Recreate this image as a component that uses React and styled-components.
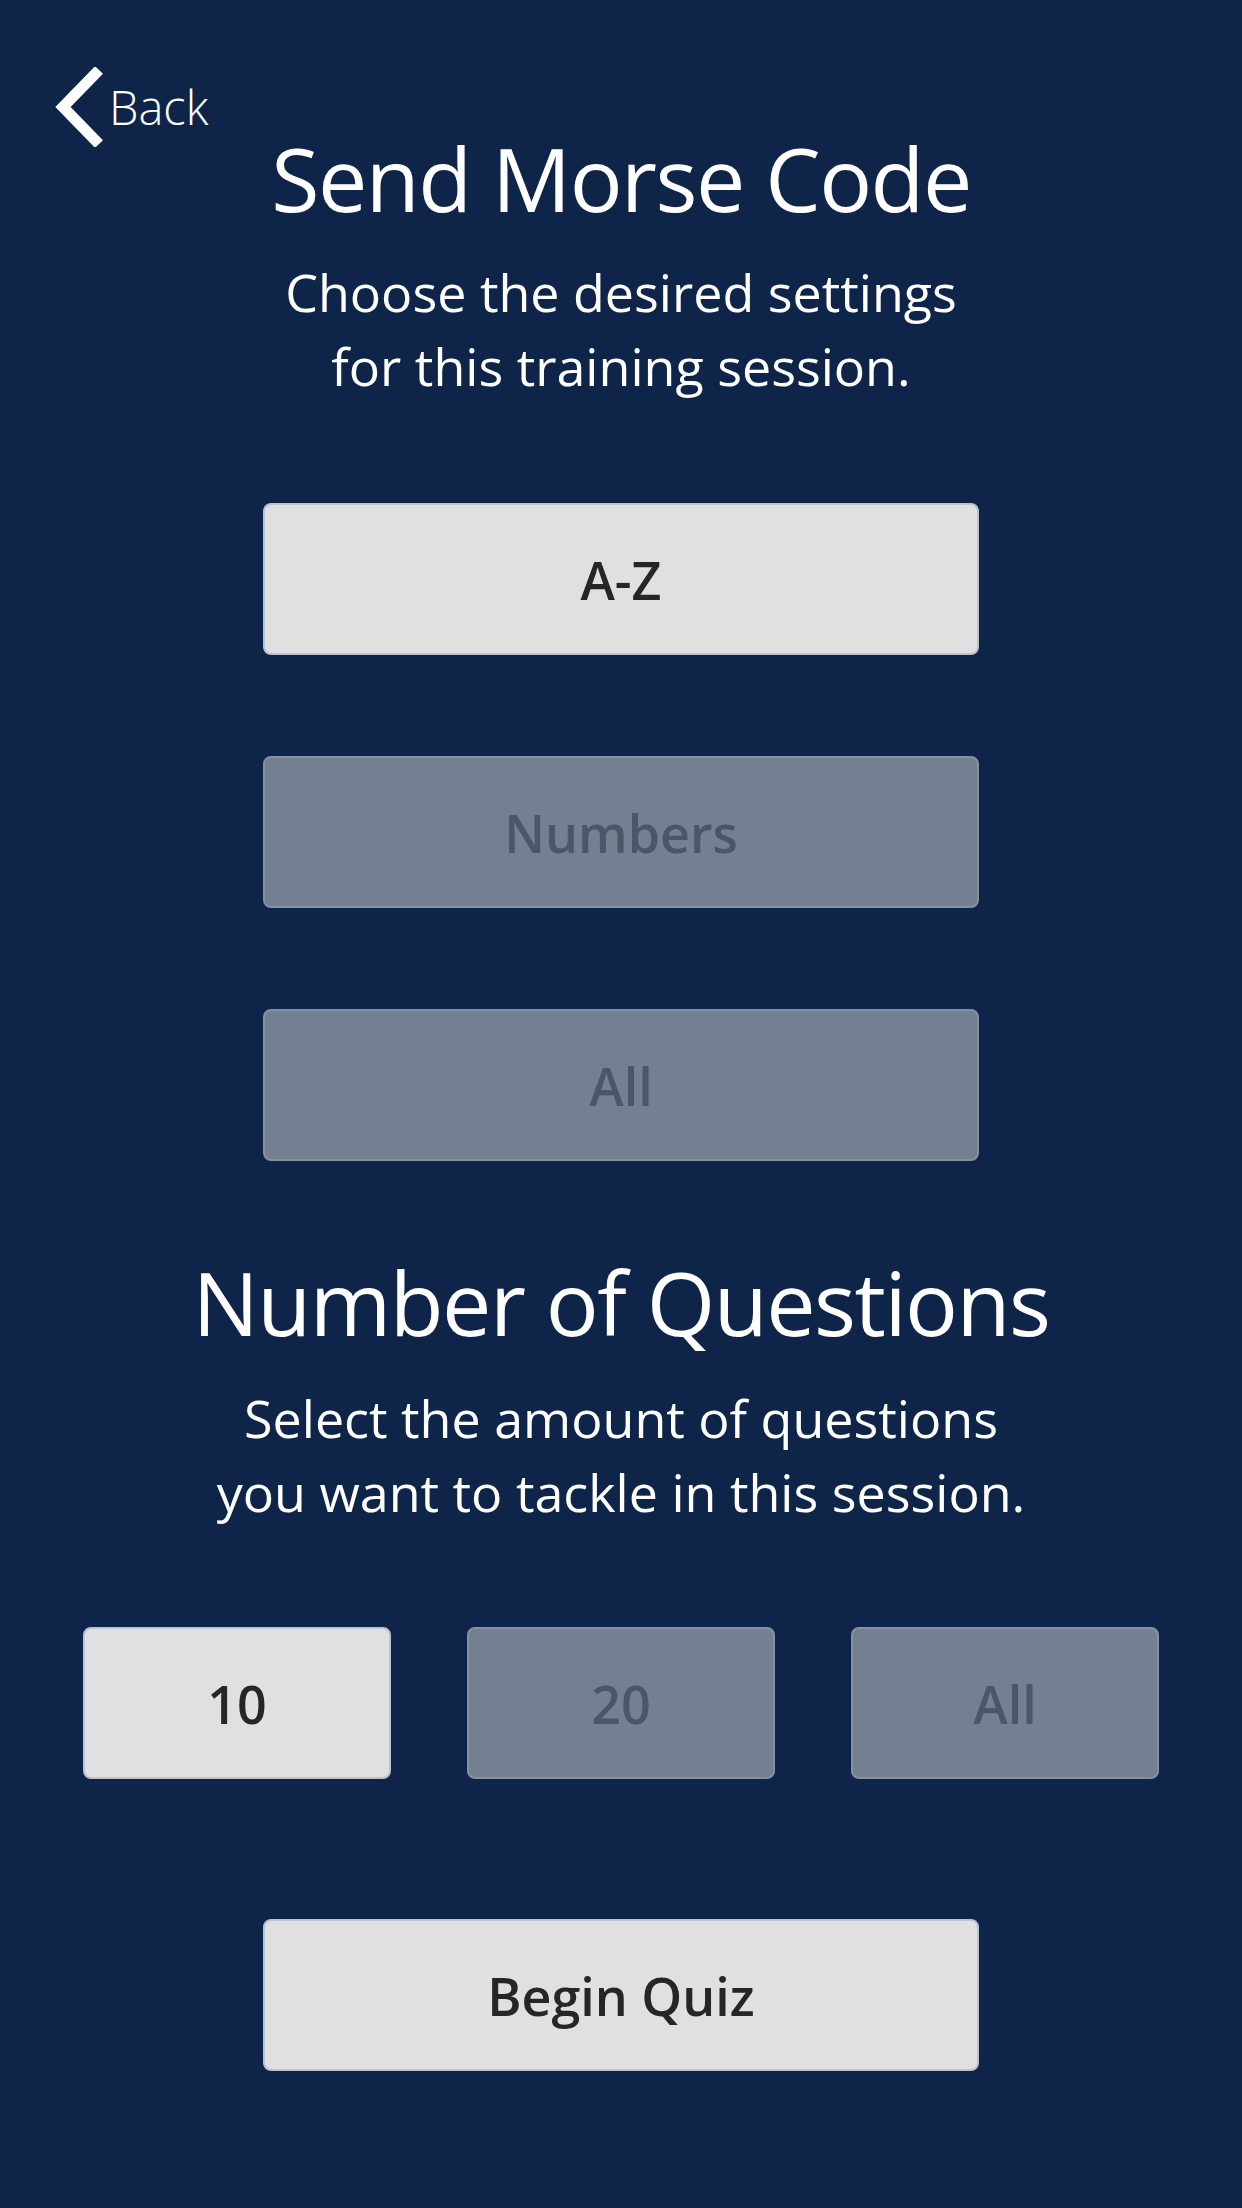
import React, { useState } from "react";
import styled, { createGlobalStyle } from "styled-components";

const GlobalStyle = createGlobalStyle`
  html, body {
    margin: 0;
    padding: 0;
    background: #0e2549;
  }
  * {
    box-sizing: border-box;
  }
`;

const Screen = styled.div`
  width: 1242px;
  min-height: 2208px;
  background: #0e2549;
  padding-top: 67px;
  font-family: "Open Sans", "Noto Sans", sans-serif;
  color: #ffffff;
  display: flex;
  flex-direction: column;
  align-items: center;
`;
const BackRow = styled.div`
  align-self: flex-start;
  display: flex;
  align-items: center;
  gap: 6px;
  height: 80px;
  padding-left: 53px;
  cursor: pointer;
`;
const BackLabel = styled.span`
  font-size: 47px;
  font-weight: 300;
  line-height: 1;
  margin-top: 0;
`;
const Title = styled.h1`
  margin: ${(p) => p.$top}px 0 0;
  font-size: 88px;
  font-weight: 400;
  line-height: 1;
  letter-spacing: -1.5px;
  text-align: center;
`;
const Subtitle = styled.p`
  margin: ${(p) => p.$top}px 0 0;
  font-size: 52px;
  font-weight: 400;
  line-height: 74px;
  text-align: center;
`;
const ChoiceList = styled.div`
  margin-top: 100px;
  display: flex;
  flex-direction: column;
  gap: 101px;
`;
const ChoiceButton = styled.button`
  width: ${(p) => (p.$small ? 308 : 716)}px;
  height: 152px;
  display: flex;
  align-items: center;
  justify-content: center;
  border-radius: 8px;
  border: 2px solid ${(p) => (p.$active ? "#bcc3ce" : "#8590a2")};
  background: ${(p) => (p.$active ? "#e0e0e0" : "#747f91")};
  color: ${(p) => (p.$active ? "#262626" : "#4c5667")};
  font-family: "Open Sans", "Noto Sans", sans-serif;
  font-size: 52px;
  font-weight: 600;
  cursor: pointer;
  padding: 0;
`;
const CountRow = styled.div`
  margin-top: 98px;
  display: flex;
  gap: 76px;
`;
const Footer = styled.div`
  margin-top: 140px;
`;

const Chevron = () => (
  <svg width="50" height="80" viewBox="0 0 50 80">
    <path d="M46 3 L10 40 L46 77" fill="none" stroke="#ffffff" strokeWidth="11" />
  </svg>
);

const sets = ["A-Z", "Numbers", "All"];
const counts = ["10", "20", "All"];

const App = () => {
  let [set, setSet] = useState("A-Z");
  let [count, setCount] = useState("10");

  return (
    <>
      <GlobalStyle />
      <Screen>
        <BackRow>
          <Chevron />
          <BackLabel>Back</BackLabel>
        </BackRow>
        <Title $top={-13}>Send Morse Code</Title>
        <Subtitle $top={33}>
          Choose the desired settings
          <br />
          for this training session.
        </Subtitle>
        <ChoiceList>
          {sets.map((item) => (
            <ChoiceButton key={item} $active={set === item} onClick={() => setSet(item)}>
              {item}
            </ChoiceButton>
          ))}
        </ChoiceList>
        <Title $top={97}>Number of Questions</Title>
        <Subtitle $top={35}>
          Select the amount of questions
          <br />
          you want to tackle in this session.
        </Subtitle>
        <CountRow>
          {counts.map((item) => (
            <ChoiceButton key={item} $small $active={count === item} onClick={() => setCount(item)}>
              {item}
            </ChoiceButton>
          ))}
        </CountRow>
        <Footer>
          <ChoiceButton $active>Begin Quiz</ChoiceButton>
        </Footer>
      </Screen>
    </>
  );
};

export default App;
